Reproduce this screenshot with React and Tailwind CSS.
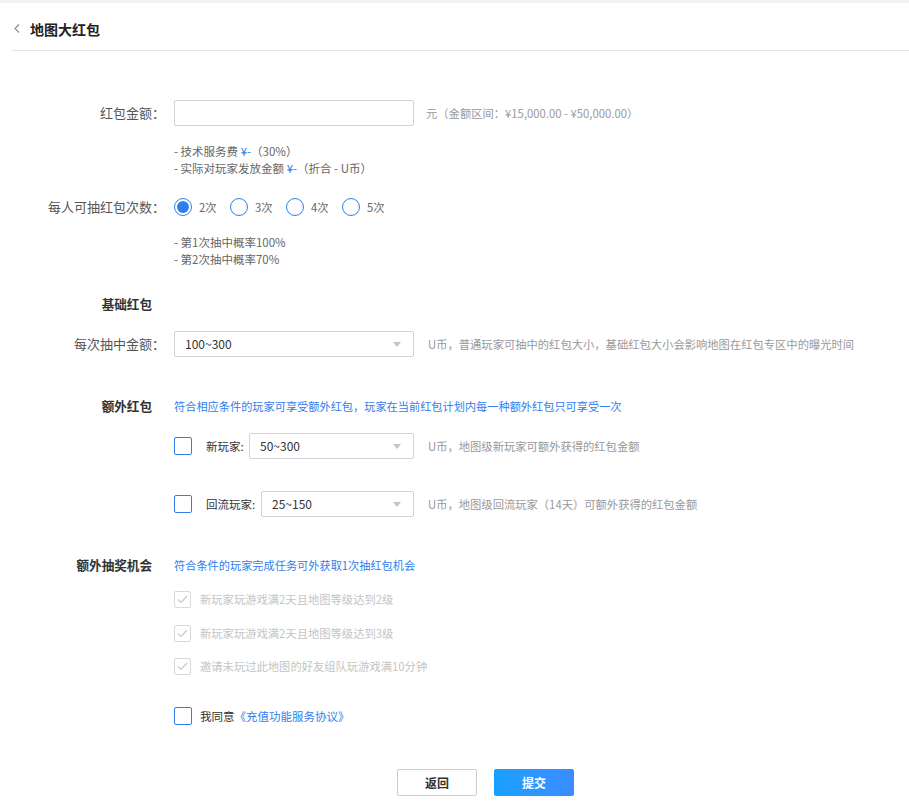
import React from "react";

// Small reusable bits for the red-packet form
function Caret() {
  return (
    <svg width="8" height="5" viewBox="0 0 8 5" className="shrink-0">
      <path d="M0 0h8L4 5z" fill="#c0c4cc" />
    </svg>
  );
}

function Select({ value, className }) {
  return (
    <div
      className={`flex h-[26px] items-center justify-between rounded-[2px] border border-[#cfd3d9] bg-white pl-[10px] pr-[12px] text-[12px] text-[#333] ${className}`}
    >
      <span>{value}</span>
      <Caret />
    </div>
  );
}

function Radio({ checked, label }) {
  return (
    <div className="flex w-[56px] items-center gap-[7px]">
      <span className="flex h-[18px] w-[18px] items-center justify-center rounded-full border-[1.5px] border-[#2f80ed] bg-white">
        {checked && <span className="h-[12px] w-[12px] rounded-full bg-[#2f80ed]" />}
      </span>
      <span className="text-[11.3px] text-[#666]">{label}</span>
    </div>
  );
}

function BlueBox() {
  return <span className="block h-[18px] w-[18px] shrink-0 rounded-[2px] border-[1.5px] border-[#2f80ed] bg-white" />;
}

function DisabledCheck({ text }) {
  return (
    <div className="flex h-[20px] items-center gap-[9px]">
      <span className="flex h-[17px] w-[17px] items-center justify-center rounded-[2px] border border-[#d9d9d9] bg-white">
        <svg width="11" height="9" viewBox="0 0 11 9">
          <path d="M1 4.5l3 3L10 1" fill="none" stroke="#c8c8c8" strokeWidth="1.2" />
        </svg>
      </span>
      <span className="text-[11.3px] text-[#c4c4c4]">{text}</span>
    </div>
  );
}

function Label({ children }) {
  return <div className="w-[165px] shrink-0 text-right text-[13px] text-[#555]">{children}</div>;
}

function Heading({ children }) {
  return <div className="w-[152px] shrink-0 whitespace-nowrap text-right text-[12.6px] font-bold text-[#333]">{children}</div>;
}

export default function App() {
  return (
    <div className="min-h-screen bg-white font-['Noto_Sans_CJK_SC',sans-serif] leading-[20px]">
      <div className="h-[3px] bg-[#f0f2f5]" />

      {/* Header */}
      <div className="ml-[12px] flex h-[48px] items-center border-b border-[#e3e5e8] pt-[4px]">
        <svg width="6" height="9" viewBox="0 0 6 9" className="ml-[2px]">
          <path d="M5 0.5L1 4.5l4 4" fill="none" stroke="#8a8f99" strokeWidth="1.2" />
        </svg>
        <span className="ml-[10px] text-[14px] font-bold text-[#222]">地图大红包</span>
      </div>

      {/* Amount */}
      <div className="mt-[49px] flex h-[26px] items-center">
        <Label>红包金额：</Label>
        <div className="ml-[9px] h-[26px] w-[240px] rounded-[2px] border border-[#cfd3d9]" />
        <span className="ml-[12px] text-[11.3px] text-[#999]">元（金额区间：¥15,000.00 - ¥50,000.00）</span>
      </div>
      <div className="ml-[174px] mt-[17px] text-[11.5px] leading-[17px] text-[#666]">
        <div>
          - 技术服务费 <span className="text-[#2f80ed]">¥-</span>（30%）
        </div>
        <div>
          - 实际对玩家发放金额 <span className="text-[#2f80ed]">¥-</span>（折合 - U币）
        </div>
      </div>

      {/* Draw count */}
      <div className="mt-[20px] flex h-[20px] items-center">
        <Label>每人可抽红包次数：</Label>
        <div className="ml-[9px] flex">
          <Radio checked label="2次" />
          <Radio label="3次" />
          <Radio label="4次" />
          <Radio label="5次" />
        </div>
      </div>
      <div className="ml-[174px] mt-[17px] text-[11.5px] leading-[17px] text-[#666]">
        <div>- 第1次抽中概率100%</div>
        <div>- 第2次抽中概率70%</div>
      </div>

      {/* Basic */}
      <div className="mt-[26px] flex h-[20px] items-center">
        <Heading>基础红包</Heading>
      </div>
      <div className="mt-[17px] flex h-[26px] items-center">
        <Label>每次抽中金额：</Label>
        <Select value="100~300" className="ml-[9px] w-[240px]" />
        <span className="ml-[14px] text-[11.3px] text-[#999]">
          U币，普通玩家可抽中的红包大小，基础红包大小会影响地图在红包专区中的曝光时间
        </span>
      </div>

      {/* Extra */}
      <div className="mt-[39px] flex h-[20px] items-center">
        <Heading>额外红包</Heading>
        <span className="ml-[22px] text-[11.2px] text-[#2f80ed]">
          符合相应条件的玩家可享受额外红包，玩家在当前红包计划内每一种额外红包只可享受一次
        </span>
      </div>
      <div className="ml-[174px] mt-[17px] flex h-[26px] items-center">
        <BlueBox />
        <span className="ml-[14px] w-[43px] whitespace-nowrap text-[11.5px] text-[#333]">新玩家:</span>
        <Select value="50~300" className="w-[165px]" />
        <span className="ml-[14px] text-[11.3px] text-[#999]">U币，地图级新玩家可额外获得的红包金额</span>
      </div>
      <div className="ml-[174px] mt-[32px] flex h-[26px] items-center">
        <BlueBox />
        <span className="ml-[14px] w-[55px] whitespace-nowrap text-[11.5px] text-[#333]">回流玩家:</span>
        <Select value="25~150" className="w-[153px]" />
        <span className="ml-[14px] text-[11.3px] text-[#999]">U币，地图级回流玩家（14天）可额外获得的红包金额</span>
      </div>

      {/* Lottery */}
      <div className="mt-[38px] flex h-[20px] items-center">
        <Heading>额外抽奖机会</Heading>
        <span className="ml-[22px] text-[11.2px] text-[#2f80ed]">符合条件的玩家完成任务可外获取1次抽红包机会</span>
      </div>
      <div className="ml-[174px] mt-[14px] flex flex-col gap-[14px]">
        <DisabledCheck text="新玩家玩游戏满2天且地图等级达到2级" />
        <DisabledCheck text="新玩家玩游戏满2天且地图等级达到3级" />
        <div className="-mt-[1px]">
          <DisabledCheck text="邀请未玩过此地图的好友组队玩游戏满10分钟" />
        </div>
      </div>

      {/* Agreement */}
      <div className="ml-[174px] mt-[30px] flex h-[20px] items-center">
        <BlueBox />
        <span className="ml-[8px] text-[11.5px] text-[#333]">
          我同意<span className="text-[#2f80ed]">《充值功能服务协议》</span>
        </span>
      </div>

      {/* Actions */}
      <div className="ml-[397px] mt-[43px] flex gap-[17px] pb-[14px]">
        <button className="h-[27px] w-[80px] rounded-[2px] border border-[#c9cdd4] bg-white text-[12px] font-bold text-[#333]">
          返回
        </button>
        <button className="h-[27px] w-[80px] rounded-[2px] bg-gradient-to-r from-[#17a0ff] to-[#3a8cff] text-[12px] font-bold text-white">
          提交
        </button>
      </div>
    </div>
  );
}
